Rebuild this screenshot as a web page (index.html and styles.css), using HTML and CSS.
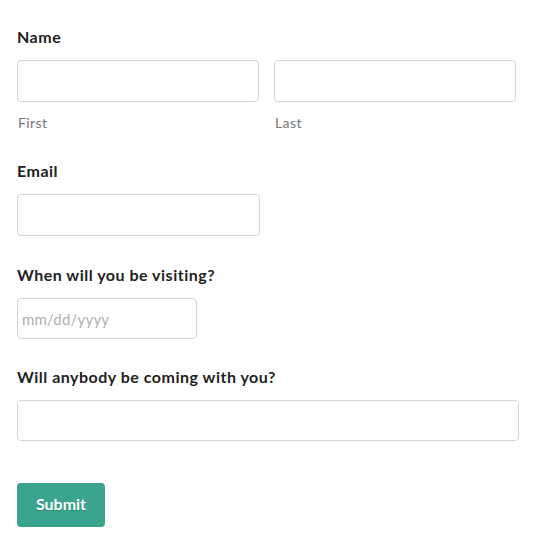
FILE: index.html
```html
<!DOCTYPE html>
<html lang="en">
<head>
<meta charset="utf-8">
<title>Visit form</title>
<link rel="stylesheet" href="styles.css">
</head>
<body>
<form class="form">
  <div class="field">
    <div class="label">Name</div>
    <div class="name-row">
      <div class="name-col">
        <input class="input" type="text">
        <div class="sublabel">First</div>
      </div>
      <div class="name-col">
        <input class="input" type="text">
        <div class="sublabel">Last</div>
      </div>
    </div>
  </div>
  <div class="field">
    <div class="label">Email</div>
    <input class="input input-email" type="text">
  </div>
  <div class="field field-date">
    <div class="label">When will you be visiting?</div>
    <input class="input input-date" type="text" placeholder="mm/dd/yyyy">
  </div>
  <div class="field field-last">
    <div class="label">Will anybody be coming with you?</div>
    <input class="input input-wide" type="text">
  </div>
  <button class="submit" type="button">Submit</button>
</form>
</body>
</html>
```

FILE: styles.css
```css
html, body {
  margin: 0;
  padding: 0;
  background: #ffffff;
}
body {
  font-family: Lato, "Liberation Sans", sans-serif;
  color: #222222;
}
.form {
  padding: 28px 15px 0 17px;
  display: flex;
  flex-direction: column;
  align-items: flex-start;
}
.field {
  display: flex;
  flex-direction: column;
  margin-bottom: 30px;
}
.field-date {
  margin-bottom: 29px;
}
.field-last {
  margin-bottom: 42px;
  align-self: stretch;
}
.label {
  font-size: 16px;
  font-weight: 700;
  line-height: 18px;
  letter-spacing: 0.5px;
  margin-bottom: 14px;
  color: #222222;
}
.name-row {
  display: flex;
  gap: 15px;
}
.name-col {
  display: flex;
  flex-direction: column;
}
.input {
  box-sizing: border-box;
  height: 42px;
  width: 242px;
  border: 1px solid #d4d4d4;
  border-radius: 4px;
  background: #ffffff;
  font-family: Lato, "Liberation Sans", sans-serif;
  font-size: 15px;
  padding: 0 4px;
  margin: 0;
  outline: none;
}
.input-email {
  width: 243px;
}
.input-date {
  width: 180px;
  height: 41px;
}
.input-date::placeholder {
  color: #b0b0b0;
  letter-spacing: 0.2px;
}
.input-wide {
  width: 502px;
  height: 41px;
}
.sublabel {
  margin-top: 12px;
  font-size: 14px;
  line-height: 18px;
  letter-spacing: 0.4px;
  color: #777777;
  padding-left: 1px;
}
.submit {
  width: 88px;
  height: 44px;
  border: none;
  border-radius: 4px;
  background: #3aa48f;
  color: #ffffff;
  font-family: Lato, "Liberation Sans", sans-serif;
  font-size: 16px;
  font-weight: 700;
  text-shadow: 0 1px 1px rgba(0, 0, 0, 0.2);
  padding: 0 0 4px 0;
  cursor: pointer;
}
```
